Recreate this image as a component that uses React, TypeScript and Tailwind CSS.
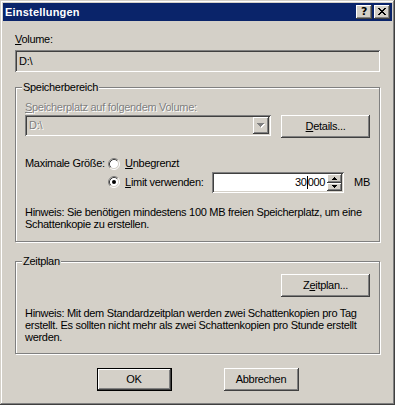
import React from 'react';

const raised =
    'shadow-[inset_-1px_-1px_0_#404040,inset_1px_1px_0_#ffffff,inset_-2px_-2px_0_#808080,inset_2px_2px_0_#d4d0c8]';
const sunken =
    'shadow-[inset_1px_1px_0_#808080,inset_-1px_-1px_0_#ffffff,inset_2px_2px_0_#404040,inset_-2px_-2px_0_#d4d0c8]';
const etched = 'border border-[#808080] shadow-[inset_1px_1px_0_#ffffff,1px_1px_0_#ffffff]';
const disabledText = 'text-[#808080] [text-shadow:1px_1px_0_#ffffff]';

const Radio: React.FC<{ checked?: boolean }> = ({ checked }) => (
    <svg width="12" height="12" viewBox="0 0 12 12" className="shrink-0">
        <circle cx="6" cy="6" r="4.5" fill="#ffffff" />
        <path d="M2.11 9.89 A5.5 5.5 0 0 1 9.89 2.11" stroke="#808080" fill="none" />
        <path d="M9.89 2.11 A5.5 5.5 0 0 1 2.11 9.89" stroke="#ffffff" fill="none" />
        <path d="M2.82 9.18 A4.5 4.5 0 0 1 9.18 2.82" stroke="#404040" fill="none" />
        <path d="M9.18 2.82 A4.5 4.5 0 0 1 2.82 9.18" stroke="#d4d0c8" fill="none" />
        {checked && <circle cx="6" cy="6" r="2" fill="#000000" />}
    </svg>
);

const Group: React.FC<{ title: string; className?: string; children: React.ReactNode }> = ({ title, className, children }) => (
    <div className={`relative ${etched} ${className ?? ''}`}>
        <span className="absolute -top-[7px] left-[6px] bg-[#d4d0c8] px-[1px] leading-[13px]">{title}</span>
        {children}
    </div>
);

const Button: React.FC<{ children: React.ReactNode; className?: string; isDefault?: boolean }> = ({ children, className, isDefault }) => (
    <div className={`h-[23px] flex items-center justify-center bg-[#d4d0c8] ${isDefault ? 'border border-black' : ''} ${className ?? ''}`}>
        <div className={`w-full h-full flex items-center justify-center ${raised}`}>{children}</div>
    </div>
);

const App: React.FC = () => {
    return (
        <div className="w-[395px] h-[405px] bg-[#d4d0c8] p-[3px] font-['Liberation_Sans',Arial,sans-serif] text-[11px] leading-[13px] tracking-[-0.3px] text-black shadow-[inset_-1px_-1px_0_#404040,inset_1px_1px_0_#d4d0c8,inset_-2px_-2px_0_#808080,inset_2px_2px_0_#ffffff] overflow-hidden select-none">
            {/* title bar */}
            <div className="h-[18px] bg-[#0a246a] flex items-center pl-[2px] pr-[2px]">
                <span className="flex-1 text-white font-bold text-[11px] tracking-[0.2px]">Einstellungen</span>
                <div className="flex gap-[2px]">
                    <div className={`w-[16px] h-[14px] bg-[#d4d0c8] ${raised} flex items-center justify-center`}>
                        <span className="font-bold text-[11px] leading-[11px] font-['DejaVu_Sans',sans-serif] -mt-[1px]">?</span>
                    </div>
                    <div className={`w-[16px] h-[14px] bg-[#d4d0c8] ${raised} flex items-center justify-center`}>
                        <svg width="8" height="7" viewBox="0 0 8 7" shapeRendering="crispEdges" className="-mt-[1px]">
                            <path d="M0 0h2v1h-2zM6 0h2v1h-2zM1 1h2v1h-2zM5 1h2v1h-2zM2 2h4v1h-4zM3 3h2v1h-2zM2 4h4v1h-4zM1 5h2v1h-2zM5 5h2v1h-2zM0 6h2v1h-2zM6 6h2v1h-2z" fill="#000000" />
                        </svg>
                    </div>
                </div>
            </div>

            {/* content */}
            <div className="px-[12px] pt-[12px]">
                <div>
                    <span className="underline underline-offset-[1px]">V</span>olume:
                </div>
                <div className={`mt-[4px] h-[22px] flex items-center pl-[4px] bg-[#d4d0c8] ${sunken}`}>D:\</div>

                <Group title="Speicherbereich" className="mt-[15px] h-[155px] px-[9px] pt-[13px]">
                    <div className={disabledText}>
                        <span className="underline underline-offset-[1px]">S</span>peicherplatz auf folgendem Volume:
                    </div>
                    <div className="mt-[1px] flex items-start gap-[10px]">
                        <div className={`flex-1 h-[21px] flex items-center pl-[4px] pr-[2px] ${sunken}`}>
                            <span className={`flex-1 ${disabledText}`}>D:\</span>
                            <div className={`w-[16px] h-[17px] bg-[#d4d0c8] ${raised} flex items-center justify-center`}>
                                <svg width="8" height="5" viewBox="0 0 8 5" shapeRendering="crispEdges">
                                    <path d="M1 1h7v1h-1v1h-1v1h-1v1h-1v-1h-1v-1h-1v-1h-1z" fill="#ffffff" />
                                    <path d="M0 0h7v1h-1v1h-1v1h-1v1h-1v-1h-1v-1h-1v-1h-1z" fill="#808080" />
                                </svg>
                            </div>
                        </div>
                        <Button className="w-[89px]">
                            <span>
                                <span className="underline underline-offset-[1px]">D</span>etails...
                            </span>
                        </Button>
                    </div>

                    <div className="mt-[19px] flex">
                        <div className="w-[86px] h-[13px] whitespace-nowrap">Maximale Größe:</div>
                        <div className="flex flex-col">
                            <div className="h-[13px] flex items-center">
                                <Radio />
                                <span className="ml-[5px]">
                                    <span className="underline underline-offset-[1px]">U</span>nbegrenzt
                                </span>
                            </div>
                            <div className="mt-[1px] h-[22px] flex items-center">
                                <Radio checked />
                                <span className="ml-[5px] w-[87px] whitespace-nowrap">
                                    <span className="underline underline-offset-[1px]">L</span>imit verwenden:
                                </span>
                                <div className={`w-[132px] h-[21px] bg-white flex items-center pl-[2px] pr-[2px] ${sunken}`}>
                                    <span className="flex-1 pr-[2px] flex justify-end items-center">
                                        30<span className="inline-block w-[1px] h-[13px] bg-black" />000
                                    </span>
                                    <div className="w-[15px] h-[17px] flex flex-col">
                                        <div className={`h-[9px] bg-[#d4d0c8] ${raised} flex items-center justify-center`}>
                                            <svg width="5" height="3" viewBox="0 0 5 3" shapeRendering="crispEdges">
                                                <path d="M2 0h1v1h1v1h1v1h-5v-1h1v-1h1z" fill="#000000" />
                                            </svg>
                                        </div>
                                        <div className={`h-[8px] bg-[#d4d0c8] ${raised} flex items-center justify-center`}>
                                            <svg width="5" height="3" viewBox="0 0 5 3" shapeRendering="crispEdges">
                                                <path d="M0 0h5v1h-1v1h-1v1h-1v-1h-1v-1h-1z" fill="#000000" />
                                            </svg>
                                        </div>
                                    </div>
                                </div>
                                <span className="ml-[10px]">MB</span>
                            </div>
                        </div>
                    </div>

                    <p className="mt-[13px] leading-[12px]">
                        Hinweis: Sie benötigen mindestens 100 MB freien Speicherplatz, um eine Schattenkopie zu erstellen.
                    </p>
                </Group>

                <Group title="Zeitplan" className="mt-[19px] h-[93px] px-[9px] pt-[12px]">
                    <div className="flex justify-end">
                        <Button className="w-[89px]">
                            <span>
                                Z<span className="underline underline-offset-[1px]">e</span>itplan...
                            </span>
                        </Button>
                    </div>
                    <p className="mt-[10px] leading-[12px]">
                        Hinweis: Mit dem Standardzeitplan werden zwei Schattenkopien pro Tag erstellt. Es sollten nicht mehr als zwei Schattenkopien pro Stunde erstellt werden.
                    </p>
                </Group>

                <div className="mt-[14px] flex justify-center gap-[52px]">
                    <Button isDefault className="w-[75px]">OK</Button>
                    <Button className="w-[75px]">Abbrechen</Button>
                </div>
            </div>
        </div>
    );
};

export default App;
